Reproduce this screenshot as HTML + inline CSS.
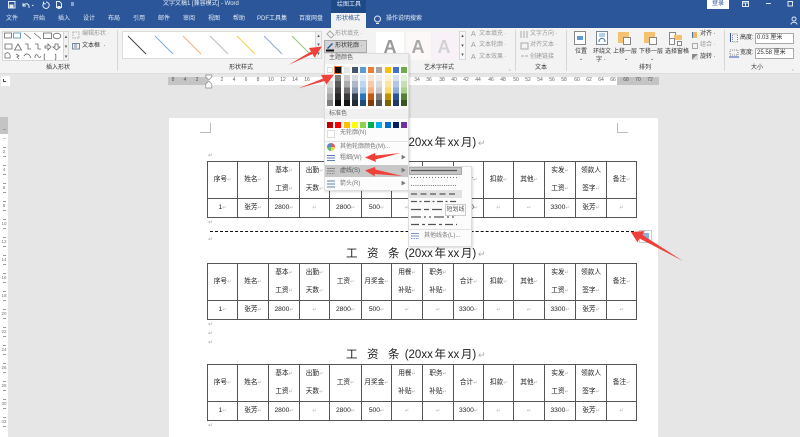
<!DOCTYPE html>
<html><head><meta charset="utf-8"><style>
*{box-sizing:border-box}
html,body{margin:0;padding:0}
body{width:800px;height:437px;overflow:hidden;position:relative;background:#e6e6e6;font-family:"Liberation Sans","Noto Sans CJK SC",sans-serif;color:#333}
.a,.t,.w,.s{position:absolute}
.t{white-space:nowrap;font-size:6px;line-height:9px}
.w{white-space:nowrap;font-size:6px;line-height:9px;color:#e4ebf5}
.g{color:#999}
.r{position:absolute;font-size:5px;line-height:7px;color:#666;top:77px;width:12px;text-align:center}
.r.d{color:#555}
.v{position:absolute;left:0;width:8px;height:10px;font-size:4.500px;line-height:10px;text-align:center;color:#777}
.v:before{content:"";position:absolute;left:3px;top:0;width:3px;height:1px;background:#999}
.v:after{content:"";position:absolute;left:3px;top:9px;width:3px;height:1px;background:#999}
table{position:absolute;left:207px;border-collapse:collapse;table-layout:fixed;width:429px;font-size:6.700px;color:#222}
td{border:1px solid #555;padding:0;text-align:center;line-height:9px;overflow:hidden;white-space:nowrap}
.h td{height:36px}.b td{height:19px}
.h td span.two{display:block;line-height:18px}
i{font-style:normal;color:#aaa;font-size:5px}
.title{position:absolute;left:346px;width:145px;font-size:11.500px;line-height:15px;white-space:pre;color:#222;word-spacing:-1.500px}
.title u{text-decoration:none;letter-spacing:9.500px;margin-right:-6px}
.p{position:absolute;left:208px;color:#aaa;font-size:6px;line-height:8px}
.s{width:6px;height:5.500px}
.col{position:absolute;top:75px;width:6px;height:31px}
</style></head><body>

<!-- title bar + tabs -->
<div class="a" style="left:0;top:0;width:800px;height:27.500px;background:#2b579a"></div>
<div class="a" style="left:331px;top:0;width:35px;height:13px;background:#1e4a88"></div>
<div class="w" style="left:337px;top:1px">绘图工具</div>
<div class="w" style="left:163px;top:0">文字文稿1 [兼容模式]  -  Word</div>
<svg class="a" style="left:0;top:0" width="80" height="12" fill="none" stroke="#e4ebf5" stroke-width="1">
<rect x="8.500" y="1.500" width="6.500" height="6.500"/><rect x="10" y="5" width="3" height="3" fill="#e4ebf5"/>
<path d="M23 3v3h3M23 6c2-3 5-3 6 0v2"/><path d="M32 5l1.500 1" />
<path d="M46 2a3.200 3.200 0 1 1-2.600 1.400M43.500 1.500v2.300h2.300"/>
<path d="M56.500 1.500h3l2 2v4h-5zM58 6.500h2v2h-2z"/><path d="M71 3h3M71 5h3"/>
</svg>
<div class="a" style="left:707px;top:0;width:22px;height:9px;background:#fff;color:#2b579a;font-size:6px;line-height:8px;text-align:center">登录</div>
<svg class="a" style="left:735px;top:0" width="60" height="26" fill="none" stroke="#dfe7f3" stroke-width="1">
<rect x="7.500" y="1.500" width="6" height="5"/><path d="M7.500 3h6M10.500 3v3"/><path d="M31 3.500h5"/><rect x="53" y="1.500" width="4.500" height="4.500"/>
</svg>
<svg class="a" style="left:790px;top:16px" width="9" height="10" fill="none" stroke="#dfe7f3"><circle cx="4" cy="3" r="2"/><path d="M1 8.500c0-3 6-3 6 0"/></svg>

<div class="w" style="left:6px;top:15px">文件</div>
<div class="w" style="left:33px;top:15px">开始</div>
<div class="w" style="left:58px;top:15px">插入</div>
<div class="w" style="left:83px;top:15px">设计</div>
<div class="w" style="left:108px;top:15px">布局</div>
<div class="w" style="left:133px;top:15px">引用</div>
<div class="w" style="left:158px;top:15px">邮件</div>
<div class="w" style="left:183px;top:15px">审阅</div>
<div class="w" style="left:208px;top:15px">视图</div>
<div class="w" style="left:233px;top:15px">帮助</div>
<div class="w" style="left:257px;top:15px">PDF工具集</div>
<div class="w" style="left:299px;top:15px">百度网盘</div>
<div class="a" style="left:331px;top:13px;width:35px;height:15px;background:#f3f3f3"></div>
<div class="t" style="left:336px;top:15px;color:#2b579a">形状格式</div>
<svg class="a" style="left:373px;top:15px" width="9" height="11" fill="none" stroke="#e4ebf5"><circle cx="4.500" cy="4" r="3"/><path d="M3 8.500h3"/></svg>
<div class="w" style="left:386px;top:15px">操作说明搜索</div>

<!-- ribbon -->
<div class="a" style="left:0;top:27.500px;width:800px;height:46px;background:#f3f3f3;border-bottom:1px solid #ddd"></div>
<div class="a" style="left:117px;top:30px;width:1px;height:41px;background:#d6d6d6"></div>
<div class="a" style="left:515px;top:30px;width:1px;height:41px;background:#d6d6d6"></div>
<div class="a" style="left:566px;top:30px;width:1px;height:41px;background:#d6d6d6"></div>
<div class="a" style="left:724px;top:30px;width:1px;height:41px;background:#d6d6d6"></div>

<!-- insert shape -->
<div class="a" style="left:2px;top:31px;width:67px;height:30px;background:#fff;border:1px solid #d8d8d8"></div>
<svg class="a" style="left:3px;top:31px" width="68" height="30" fill="none" stroke="#666" stroke-width=".8">
<rect x="1.500" y="2" width="7" height="5"/><rect x="10.500" y="2" width="7" height="5" stroke="#48a"/>
<path d="M21 2l7 6M31 2l7 6"/><rect x="40.500" y="2" width="8" height="5.500"/><ellipse cx="54" cy="5" rx="3.800" ry="2.800"/>
<path d="M2 13h7v5H2zM15 13l3.500 6h-7zM22 13h3v5h3M32 13h3v5h3M42 15h3v-2l3 3-3 3v-2h-3zM52 13h3v3h2l-3.500 3-3.500-3h2z"/>
<path d="M2 27v-4c3-3 6 0 5 4zM13 23l3 2-2 1 2 2M21 25c2-3 5-3 7 2M32 27c0-4 2-4 3-2s2 2 3 0M42 23c-2 1 0 2-1 3 1 1-1 2 1 3M52 23c2 1 0 2 1 3-1 1 1 2-1 3"/>
</svg>
<div class="a" style="left:63px;top:31px;width:6px;height:30px;background:#f1f1f1;border:1px solid #d8d8d8;color:#555;font-size:5px;line-height:10px;text-align:center">▴<br>▾<br>▾</div>
<div class="t g" style="left:82px;top:30px">编辑形状 ·</div>
<svg class="a" style="left:72px;top:31px" width="8" height="8" fill="none" stroke="#aaa"><rect x="1" y="1" width="6" height="6" stroke-dasharray="1.500 1"/></svg>
<svg class="a" style="left:72px;top:42px" width="8" height="8" fill="none" stroke="#789"><rect x=".5" y="1.500" width="7" height="5.500"/><path d="M2 3h3M2 5h3"/></svg>
<div class="t" style="left:82px;top:42px">文本框 &nbsp;·</div>
<div class="t" style="left:46px;top:64px">插入形状</div>

<!-- shape style -->
<div class="a" style="left:122px;top:31px;width:194px;height:28px;background:#fff;border:1px solid #dcdcdc"></div>
<svg class="a" style="left:122px;top:31px" width="194" height="28" fill="none" stroke-width="1">
<path d="M6 5l18 18" stroke="#444"/><path d="M33 5l18 18" stroke="#7aa9d8"/><path d="M61 5l18 18" stroke="#f0ae80"/><path d="M88 5l18 18" stroke="#bbb"/>
<path d="M115 5l18 18" stroke="#fbcf4b"/><path d="M142 5l18 18" stroke="#8fa9dd"/><path d="M170 5l18 18" stroke="#98c67a"/>
</svg>
<div class="a" style="left:315px;top:31px;width:7px;height:28px;background:#f1f1f1;border:1px solid #d8d8d8;color:#555;font-size:5px;line-height:9px;text-align:center">▴<br>▾<br>▾</div>
<div class="t" style="left:229px;top:64px">形状样式</div>

<div class="t g" style="left:335px;top:30px">形状填充 ·</div>
<svg class="a" style="left:326px;top:30px" width="9" height="9" fill="none" stroke="#aaa"><path d="M4 1l4 4-3 3-4-4z"/></svg>
<div class="a" style="left:324px;top:40px;width:43px;height:13px;background:#d4d4d4;border:1px solid #aaa"></div>
<svg class="a" style="left:325px;top:41px" width="10" height="11"><path d="M2 7l5-5 1 1-5 5z" fill="#2b579a"/><rect x="1" y="8.500" width="8" height="2" fill="#111"/></svg>
<div class="t" style="left:335px;top:42px">形状轮廓 ·</div>

<!-- word art -->
<div class="a" style="left:376px;top:32px;width:28px;height:28px;background:#fff"></div>
<div class="a" style="left:406px;top:32px;width:25px;height:28px;background:#fdf8f8"></div>
<div class="a" style="left:433px;top:32px;width:25px;height:28px;background:#f8f2f8"></div>
<div class="a" style="left:378px;top:36px;width:24px;font-size:18px;line-height:22px;text-align:center;color:#999;font-weight:bold">A</div>
<div class="a" style="left:406px;top:36px;width:24px;font-size:18px;line-height:22px;text-align:center;color:#a8a8a8;font-weight:bold">A</div>
<div class="a" style="left:432px;top:36px;width:24px;font-size:18px;line-height:22px;text-align:center;color:#d2d2d2;font-weight:bold">A</div>
<div class="a" style="left:459px;top:31px;width:7px;height:29px;background:#f8f8f8;border:1px solid #d8d8d8;color:#555;font-size:5px;line-height:9.500px;text-align:center">▴<br>▾<br>▾</div>
<div class="t g" style="left:479px;top:30px">文本填充 ·</div>
<div class="t g" style="left:479px;top:41px">文本轮廓 ·</div>
<div class="t g" style="left:479px;top:53px">文本效果 ·</div>
<div class="t g" style="left:471px;top:30px;font-size:7px">A</div>
<div class="t g" style="left:471px;top:41px;font-size:7px">A</div>
<div class="t g" style="left:471px;top:53px;font-size:7px">A</div>
<div class="t" style="left:424px;top:64px">艺术字样式</div>
<div class="t g" style="left:509px;top:65px;font-size:5px">⌞</div>

<div class="t g" style="left:530px;top:30px">文字方向 ·</div>
<div class="t g" style="left:530px;top:41px">对齐文本 ·</div>
<div class="t g" style="left:530px;top:53px">创建链接</div>
<svg class="a" style="left:520px;top:30px" width="9" height="32" fill="none" stroke="#aaa"><path d="M1 1v7M4 1v7M7 1v7M1 13h7v6H1zM1 26h3M5 26h3" /></svg>
<div class="t" style="left:535px;top:64px">文本</div>

<!-- arrange -->
<svg class="a" style="left:574px;top:31px" width="14" height="15" fill="none" stroke="#888"><rect x=".5" y=".5" width="11" height="13" fill="#fff"/><rect x="3" y="5" width="6" height="4" fill="#5b9bd5" stroke="none"/></svg>
<div class="t" style="left:575px;top:48px">位置</div><div class="t" style="left:579px;top:55px;font-size:5px">⌄</div>
<svg class="a" style="left:596px;top:31px" width="14" height="15" fill="none" stroke="#789"><rect x=".5" y=".5" width="11" height="13" fill="#fff"/><path d="M3 3h6M3 5h6" stroke="#6a9fd6"/><path d="M3 11c0-5 6-5 6 0" stroke="#47a"/></svg>
<div class="t" style="left:593px;top:48px">环绕文</div><div class="t" style="left:596px;top:56px">字 ·</div>
<div class="a" style="left:618px;top:32px;width:11px;height:11px;background:#f4c26f"></div>
<div class="a" style="left:623px;top:37px;width:8px;height:8px;background:#fff;border:1px solid #888"></div>
<div class="t" style="left:613px;top:48px">上移一层</div><div class="t" style="left:624px;top:55px;font-size:5px">⌄</div>
<div class="a" style="left:644px;top:32px;width:11px;height:11px;background:#f4c26f"></div>
<div class="a" style="left:649px;top:37px;width:8px;height:8px;background:#fff;border:1px solid #888"></div>
<div class="t" style="left:639px;top:48px">下移一层</div><div class="t" style="left:650px;top:55px;font-size:5px">⌄</div>
<div class="a" style="left:669px;top:32px;width:7px;height:7px;background:#fff;border:1px solid #888"></div>
<div class="a" style="left:674px;top:35px;width:8px;height:5px;background:#f4c26f"></div>
<div class="a" style="left:669px;top:38px;width:6px;height:7px;background:#fff;border:1px solid #888"></div>
<div class="a" style="left:677px;top:41px;width:5px;height:5px;background:#fff;border:1px solid #888"></div>
<div class="t" style="left:665px;top:48px">选择窗格</div>
<div class="a" style="left:692px;top:32px;width:5px;height:6px;border-left:1px solid #47a;background:#f0b860"></div>
<div class="t" style="left:700px;top:30px">对齐 ·</div>
<div class="t g" style="left:700px;top:41px">组合 ·</div>
<div class="t" style="left:700px;top:53px">旋转 ·</div>
<div class="a" style="left:692px;top:43px;width:6px;height:6px;border:1px dashed #aaa"></div>
<div class="a" style="left:692px;top:54px;width:6px;height:6px;background:linear-gradient(135deg,#888 50%,#ddd 50%)"></div>
<div class="t" style="left:639px;top:64px">排列</div>

<!-- size -->
<svg class="a" style="left:729px;top:32px" width="10" height="26" fill="none" stroke="#555"><rect x="3.500" y="2" width="5" height="8" stroke="#888" stroke-dasharray="1 1"/><path d="M1.500 1v9" stroke="#35a"/><rect x="1" y="18" width="8" height="5" stroke="#888" stroke-dasharray="1 1"/><path d="M0 25h10" stroke="#35a"/></svg>
<div class="t" style="left:740px;top:34px">高度:</div>
<div class="t" style="left:740px;top:49px">宽度:</div>
<div class="a" style="left:755px;top:33px;width:39px;height:11px;background:#fff;border:1px solid #aaa;font-size:6px;line-height:9px;padding-left:1px;white-space:nowrap">0.03 厘米</div>
<div class="a" style="left:755px;top:48px;width:39px;height:11px;background:#fff;border:1px solid #aaa;font-size:6px;line-height:9px;padding-left:1px;white-space:nowrap">25.58 厘米</div>
<div class="t" style="left:751px;top:64px">大小</div>
<div class="t g" style="left:792px;top:65px;font-size:5px">⌞</div>

<!-- ruler -->
<div class="a" style="left:1px;top:76px;width:9px;height:10px;background:#fff"></div>
<div class="a" style="left:3px;top:79px;width:3px;height:3px;border-left:1px solid #444;border-bottom:1px solid #444"></div>
<div class="a" style="left:168px;top:77px;width:40px;height:8px;background:#c4c4c4"></div>
<div class="a" style="left:208px;top:77px;width:409px;height:8px;background:#fff"></div>
<div class="a" style="left:617px;top:77px;width:42px;height:8px;background:#c4c4c4"></div>
<svg class="a" style="left:205px;top:74px" width="10" height="15" fill="#fff" stroke="#888" stroke-width=".7"><path d="M.800 1h6v2l-3 3-3-3zM.800 14h6v-4l-3-3-3 3z"/></svg>
<span class="r d" style="left:167px">8</span><span class="r d" style="left:179px">4</span><span class="r d" style="left:191px">2</span>
<span class="r" style="left:216px">2</span><span class="r" style="left:228px">4</span><span class="r" style="left:240px">6</span><span class="r" style="left:252px">8</span><span class="r" style="left:265px">10</span><span class="r" style="left:277px">12</span><span class="r" style="left:289px">14</span><span class="r" style="left:301px">16</span>
<span class="r" style="left:411px">34</span><span class="r" style="left:423px">36</span><span class="r" style="left:436px">38</span><span class="r" style="left:448px">40</span><span class="r" style="left:460px">42</span><span class="r" style="left:472px">44</span><span class="r" style="left:485px">46</span><span class="r" style="left:497px">48</span><span class="r" style="left:510px">50</span><span class="r" style="left:522px">52</span><span class="r" style="left:534px">54</span><span class="r" style="left:546px">56</span><span class="r" style="left:558px">58</span><span class="r" style="left:571px">60</span><span class="r" style="left:583px">62</span><span class="r" style="left:595px">64</span><span class="r" style="left:607px">66</span>
<span class="r d" style="left:620px">68</span><span class="r d" style="left:632px">70</span><span class="r d" style="left:644px">72</span>

<!-- v ruler -->
<div class="a" style="left:0;top:117px;width:8px;height:320px;background:#fff"></div>
<div class="a" style="left:0;top:117px;width:8px;height:17px;background:#c4c4c4"></div>
<div class="a" style="left:3px;top:129px;width:3px;height:1px;background:#999"></div>
<div class="a" style="left:3px;top:138px;width:3px;height:1px;background:#ccc"></div>
<div class="v" style="top:147px">2</div><div class="v" style="top:165px">4</div><div class="v" style="top:183px">6</div><div class="v" style="top:201px">8</div><div class="v" style="top:219px">10</div><div class="v" style="top:237px">12</div><div class="v" style="top:255px">14</div><div class="v" style="top:273px">16</div><div class="v" style="top:291px">18</div><div class="v" style="top:309px">20</div><div class="v" style="top:327px">22</div><div class="v" style="top:345px">24</div><div class="v" style="top:363px">26</div><div class="v" style="top:381px">28</div><div class="v" style="top:399px">30</div><div class="v" style="top:417px">32</div>

<!-- page -->
<div class="a" style="left:169px;top:118px;width:489px;height:319px;background:#fff"></div>
<div class="a" style="left:200px;top:123px;width:11px;height:10px;border-right:1px solid #bbb;border-bottom:1px solid #bbb"></div>
<div class="a" style="left:617px;top:123px;width:11px;height:10px;border-left:1px solid #bbb;border-bottom:1px solid #bbb"></div>

<div class="p" style="top:152px">↵</div>
<div class="title" style="top:136px"><u>工资条</u> (20xx 年 xx 月) <i style="font-size:9px">↵</i></div>
<table style="top:161px"><colgroup><col style="width:30px"><col style="width:31px"><col style="width:31px"><col style="width:30px"><col style="width:32px"><col style="width:30px"><col style="width:31px"><col style="width:31px"><col style="width:30px"><col style="width:30px"><col style="width:31px"><col style="width:31px"><col style="width:31px"><col style="width:30px"></colgroup>
<tr class="h"><td>序号<i>↵</i></td><td>姓名<i>↵</i></td><td><span class="two">基本<i>↵</i><br>工资<i>↵</i></span></td><td><span class="two">出勤<i>↵</i><br>天数<i>↵</i></span></td><td>工资<i>↵</i></td><td>月奖金<i>↵</i></td><td><span class="two">用餐<i>↵</i><br>补贴<i>↵</i></span></td><td><span class="two">职务<i>↵</i><br>补贴<i>↵</i></span></td><td>合计<i>↵</i></td><td>扣款<i>↵</i></td><td>其他<i>↵</i></td><td><span class="two">实发<i>↵</i><br>工资<i>↵</i></span></td><td><span class="two">领款人<br>签字<i>↵</i></span></td><td>备注<i>↵</i></td></tr>
<tr class="b"><td>1<i>↵</i></td><td>张芳<i>↵</i></td><td>2800<i>↵</i></td><td><i>↵</i></td><td>2800<i>↵</i></td><td>500<i>↵</i></td><td><i>↵</i></td><td><i>↵</i></td><td>3300<i>↵</i></td><td><i>↵</i></td><td><i>↵</i></td><td>3300<i>↵</i></td><td>张芳<i>↵</i></td><td><i>↵</i></td></tr></table>
<div class="p" style="top:219px">↵</div>
<div class="a" style="left:210px;top:230.500px;width:424px;height:0;border-top:1px dashed #111"></div>
<div class="a" style="left:639px;top:230px;width:13px;height:13px;background:#fff;border:1px solid #ccc"></div>
<div class="a" style="left:642px;top:233px;width:7px;height:7px;background:#8fb0d8"></div>
<div class="p" style="top:236px">↵</div>

<div class="title" style="top:247px"><u>工资条</u> (20xx 年 xx 月) <i style="font-size:9px">↵</i></div>
<table style="top:263px"><colgroup><col style="width:30px"><col style="width:31px"><col style="width:31px"><col style="width:30px"><col style="width:32px"><col style="width:30px"><col style="width:31px"><col style="width:31px"><col style="width:30px"><col style="width:30px"><col style="width:31px"><col style="width:31px"><col style="width:31px"><col style="width:30px"></colgroup>
<tr class="h"><td>序号<i>↵</i></td><td>姓名<i>↵</i></td><td><span class="two">基本<i>↵</i><br>工资<i>↵</i></span></td><td><span class="two">出勤<i>↵</i><br>天数<i>↵</i></span></td><td>工资<i>↵</i></td><td>月奖金<i>↵</i></td><td><span class="two">用餐<i>↵</i><br>补贴<i>↵</i></span></td><td><span class="two">职务<i>↵</i><br>补贴<i>↵</i></span></td><td>合计<i>↵</i></td><td>扣款<i>↵</i></td><td>其他<i>↵</i></td><td><span class="two">实发<i>↵</i><br>工资<i>↵</i></span></td><td><span class="two">领款人<br>签字<i>↵</i></span></td><td>备注<i>↵</i></td></tr>
<tr class="b"><td>1<i>↵</i></td><td>张芳<i>↵</i></td><td>2800<i>↵</i></td><td><i>↵</i></td><td>2800<i>↵</i></td><td>500<i>↵</i></td><td><i>↵</i></td><td><i>↵</i></td><td>3300<i>↵</i></td><td><i>↵</i></td><td><i>↵</i></td><td>3300<i>↵</i></td><td>张芳<i>↵</i></td><td><i>↵</i></td></tr></table>
<div class="p" style="top:321px">↵</div><div class="p" style="top:330px">↵</div><div class="p" style="top:339px">↵</div>

<div class="title" style="top:348px"><u>工资条</u> (20xx 年 xx 月) <i style="font-size:9px">↵</i></div>
<table style="top:364px"><colgroup><col style="width:30px"><col style="width:31px"><col style="width:31px"><col style="width:30px"><col style="width:32px"><col style="width:30px"><col style="width:31px"><col style="width:31px"><col style="width:30px"><col style="width:30px"><col style="width:31px"><col style="width:31px"><col style="width:31px"><col style="width:30px"></colgroup>
<tr class="h"><td>序号<i>↵</i></td><td>姓名<i>↵</i></td><td><span class="two">基本<i>↵</i><br>工资<i>↵</i></span></td><td><span class="two">出勤<i>↵</i><br>天数<i>↵</i></span></td><td>工资<i>↵</i></td><td>月奖金<i>↵</i></td><td><span class="two">用餐<i>↵</i><br>补贴<i>↵</i></span></td><td><span class="two">职务<i>↵</i><br>补贴<i>↵</i></span></td><td>合计<i>↵</i></td><td>扣款<i>↵</i></td><td>其他<i>↵</i></td><td><span class="two">实发<i>↵</i><br>工资<i>↵</i></span></td><td><span class="two">领款人<br>签字<i>↵</i></span></td><td>备注<i>↵</i></td></tr>
<tr class="b"><td>1<i>↵</i></td><td>张芳<i>↵</i></td><td>2800<i>↵</i></td><td><i>↵</i></td><td>2800<i>↵</i></td><td>500<i>↵</i></td><td><i>↵</i></td><td><i>↵</i></td><td>3300<i>↵</i></td><td><i>↵</i></td><td><i>↵</i></td><td>3300<i>↵</i></td><td>张芳<i>↵</i></td><td><i>↵</i></td></tr></table>
<div class="p" style="top:422px">↵</div>

<!-- colour menu -->
<div class="a" style="left:324px;top:53px;width:85px;height:138px;background:#fcfcfc;border:1px solid #ddd;box-shadow:1px 1px 2px rgba(0,0,0,.15)"></div>
<div class="a" style="left:325px;top:54px;width:83px;height:10px;background:#f0f0f0"></div>
<div class="t" style="left:329px;top:54px;color:#555">主题颜色</div>
<div class="s a" style="left:327px;top:67px;background:#fff;border:1px solid #ddd"></div>
<div class="s a" style="left:335px;top:67px;background:#111;outline:1px solid #ee7d31"></div>
<div class="s a" style="left:343.500px;top:67px;background:#e7e6e6"></div>
<div class="s a" style="left:351.500px;top:67px;background:#44546a"></div>
<div class="s a" style="left:360px;top:67px;background:#5b9bd5"></div>
<div class="s a" style="left:368px;top:67px;background:#ed7d31"></div>
<div class="s a" style="left:376px;top:67px;background:#a5a5a5"></div>
<div class="s a" style="left:384.500px;top:67px;background:#ffc000"></div>
<div class="s a" style="left:393px;top:67px;background:#4472c4"></div>
<div class="s a" style="left:401px;top:67px;background:#70ad47"></div>
<div class="col" style="left:327px;background:linear-gradient(#f2f2f2 20%,#d8d8d8 20% 40%,#bfbfbf 40% 60%,#a6a6a6 60% 80%,#7f7f7f 80%)"></div>
<div class="col" style="left:335px;background:linear-gradient(#7f7f7f 20%,#595959 20% 40%,#3f3f3f 40% 60%,#262626 60% 80%,#0c0c0c 80%)"></div>
<div class="col" style="left:343.500px;background:linear-gradient(#d0cece 20%,#aeabab 20% 40%,#757070 40% 60%,#3a3838 60% 80%,#171616 80%)"></div>
<div class="col" style="left:351.500px;background:linear-gradient(#d6dce4 20%,#adb9ca 20% 40%,#8496b0 40% 60%,#333f4f 60% 80%,#222a35 80%)"></div>
<div class="col" style="left:360px;background:linear-gradient(#deebf6 20%,#bdd7ee 20% 40%,#9dc3e6 40% 60%,#2e75b5 60% 80%,#1e4e79 80%)"></div>
<div class="col" style="left:368px;background:linear-gradient(#fbe5d5 20%,#f7cbac 20% 40%,#f4b183 40% 60%,#c55a11 60% 80%,#833c0b 80%)"></div>
<div class="col" style="left:376px;background:linear-gradient(#ededed 20%,#dbdbdb 20% 40%,#c9c9c9 40% 60%,#7b7b7b 60% 80%,#525252 80%)"></div>
<div class="col" style="left:384.500px;background:linear-gradient(#fff2cc 20%,#fee599 20% 40%,#ffd965 40% 60%,#bf9000 60% 80%,#7f6000 80%)"></div>
<div class="col" style="left:393px;background:linear-gradient(#d9e2f3 20%,#b4c6e7 20% 40%,#8eaadb 40% 60%,#2f5496 60% 80%,#1f3864 80%)"></div>
<div class="col" style="left:401px;background:linear-gradient(#e2efd9 20%,#c5e0b3 20% 40%,#a8d08d 40% 60%,#538135 60% 80%,#375623 80%)"></div>
<div class="a" style="left:325px;top:109px;width:83px;height:10px;background:#f0f0f0"></div>
<div class="t" style="left:329px;top:110px;color:#666">标准色</div>
<div class="s a" style="left:327px;top:122px;background:#c00000"></div>
<div class="s a" style="left:335px;top:122px;background:#ff0000"></div>
<div class="s a" style="left:343.500px;top:122px;background:#ffc000"></div>
<div class="s a" style="left:351.500px;top:122px;background:#ffff00"></div>
<div class="s a" style="left:360px;top:122px;background:#92d050"></div>
<div class="s a" style="left:368px;top:122px;background:#00b050"></div>
<div class="s a" style="left:376px;top:122px;background:#00b0f0"></div>
<div class="s a" style="left:384.500px;top:122px;background:#0070c0"></div>
<div class="s a" style="left:393px;top:122px;background:#002060"></div>
<div class="s a" style="left:401px;top:122px;background:#7030a0"></div>
<div class="a" style="left:327px;top:130px;width:8px;height:8px;background:#fff;border:1px solid #ddd"></div>
<div class="t" style="left:340px;top:129px;color:#777">无轮廓(N)</div>
<div class="a" style="left:325px;top:141px;width:83px;height:1px;background:#e2e2e2"></div>
<div class="a" style="left:327px;top:143px;width:8px;height:8px;border-radius:50%;background:conic-gradient(#e55 0 25%,#fc4 0 50%,#6b6 0 75%,#58c 0)"></div>
<div class="t" style="left:340px;top:143px;color:#777">其他轮廓颜色(M)...</div>
<svg class="a" style="left:327px;top:154px" width="9" height="9" fill="none" stroke="#5b82b8"><path d="M0 1.500h8M0 4h8M0 6.500h8"/></svg>
<div class="t" style="left:340px;top:154px;color:#777">粗细(W)</div>
<div class="t" style="left:401px;top:154px;font-size:5px;color:#777">▶</div>
<div class="a" style="left:325px;top:165px;width:83px;height:12px;background:#c8c8c8"></div>
<svg class="a" style="left:327px;top:167px" width="9" height="9" fill="none" stroke="#888"><path d="M0 1.500h8M0 4h8" /><path d="M0 6.500h8" stroke-dasharray="1.500 1"/></svg>
<div class="t" style="left:340px;top:167px;color:#555">虚线(S)</div>
<div class="t" style="left:401px;top:167px;font-size:5px;color:#777">▶</div>
<svg class="a" style="left:327px;top:179px" width="9" height="10" fill="none" stroke="#5b82b8"><path d="M0 2h8M0 5h8M0 8h8"/></svg>
<div class="t" style="left:340px;top:180px;color:#777">箭头(R)</div>
<div class="t" style="left:401px;top:180px;font-size:5px;color:#777">▶</div>

<!-- dash submenu -->
<div class="a" style="left:408px;top:166px;width:64px;height:81px;background:#fcfcfc;border:1px solid #ddd;box-shadow:1px 1px 2px rgba(0,0,0,.15)"></div>
<div class="a" style="left:409px;top:167px;width:53px;height:7.500px;background:#c4c4c4;border:1px solid #aaa"></div>
<div class="a" style="left:409px;top:190px;width:53px;height:7.500px;background:#e2e2e2"></div>
<svg class="a" style="left:410px;top:167px" width="52" height="60" fill="none" stroke="#555">
<path d="M1 3.500h46" stroke-width="1.300"/>
<path d="M1 10.500h46" stroke-dasharray="1 2" stroke="#777"/>
<path d="M1 18.500h46" stroke-dasharray="1 1.200" stroke="#777"/>
<path d="M1 27h46" stroke-dasharray="6 3.500" stroke-width="1.200"/>
<path d="M1 34.500h46" stroke-dasharray="6 2.500 2 2.500" stroke-width="1.200"/>
<path d="M1 42.500h46" stroke-dasharray="10 3 5 3" stroke-width="1.200"/>
<path d="M1 50h46" stroke-dasharray="10 3 2 3 2 3" stroke-width="1.200"/>
<path d="M1 57.500h46" stroke-dasharray="8 3 3 3" stroke-width="1.300"/>
</svg>
<div class="a" style="left:409px;top:229px;width:62px;height:1px;background:#e2e2e2"></div>
<svg class="a" style="left:411px;top:232px" width="9" height="9" fill="none" stroke="#7a9bc8"><path d="M0 1.500h8M0 4h8"/><path d="M0 6.500h8" stroke-dasharray="1.500 1"/></svg>
<div class="t" style="left:424px;top:232px;color:#777">其他线条(L)...</div>
<div class="a" style="left:445px;top:204px;width:21px;height:12px;background:#fff;border:1px solid #ccc;font-size:6px;line-height:10px;text-align:center;color:#555">短划线</div>

<!-- red arrows -->
<svg class="a" style="left:0;top:0" width="800" height="437" fill="#f0403a">
<path d="M322 46.500l-13 1.500 2 3.500-22.500 13.500 24-11 2 3.500z"/>
<path d="M334 74.500l-13 .5 2 3.500-25 10 26.500-7.500 2 3.500z"/>
<path d="M365 157.500l10-4.500.5 2.500 25-2.500-25 6.500.5 2.500z"/>
<path d="M365 170.500l10-3.500.5 2.500 27 6.500-28-2 .5 2.500z"/>
<path d="M631 232l13.500-1-2 4 40.500 26-43.500-22.500-2 4z"/>
</svg>
</body></html>
